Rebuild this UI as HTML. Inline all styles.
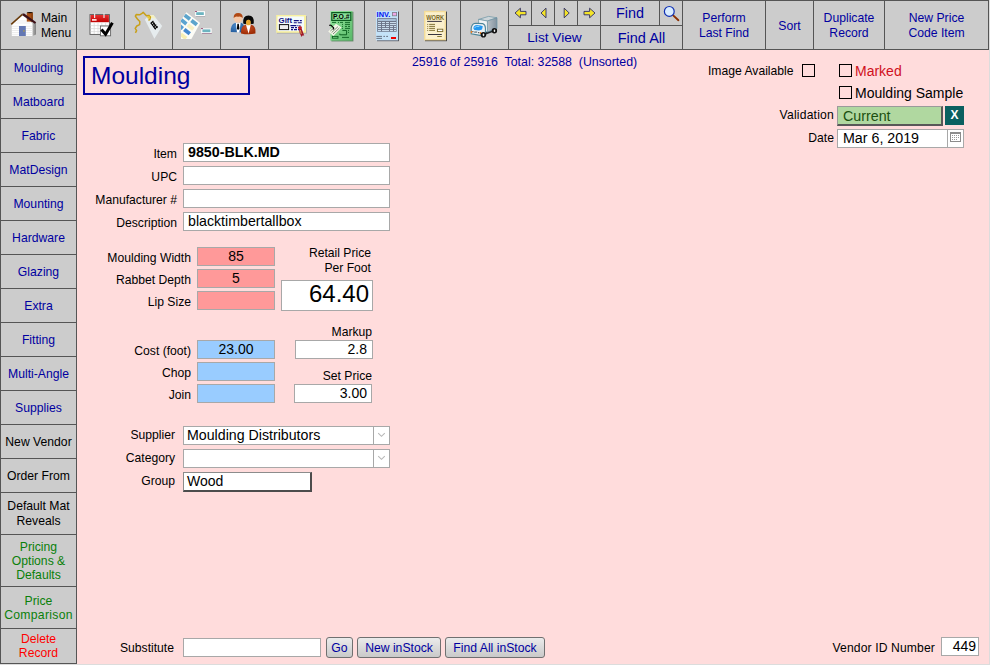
<!DOCTYPE html>
<html><head><meta charset="utf-8"><title>Moulding</title>
<style>
*{box-sizing:border-box;margin:0;padding:0}
html,body{width:990px;height:665px;overflow:hidden}
body{background:#ffdcdc;font-family:"Liberation Sans",sans-serif;font-size:13px;color:#000;position:relative}
.a{position:absolute}
.g{position:absolute;background:#cccccc}
.l{position:absolute;background:#555}
.t{position:absolute;color:#0000a0;text-align:center;white-space:nowrap}
.lbl{position:absolute;text-align:right;white-space:nowrap;font-size:12.15px;line-height:15px}
.f{position:absolute;background:#fff;border:1px solid #a8a8a8;font-size:14px;line-height:17px;white-space:nowrap;overflow:hidden}
.sb{position:absolute;left:1px;width:75px;text-align:center;color:#0000a0;font-size:12.2px;line-height:14px}
.btn{height:21px;border:1px solid #707070;border-radius:3px;background:linear-gradient(#ebebeb,#c9c9c9);color:#0000a0;font-size:12.2px;line-height:19px;padding-top:1px;text-align:center;white-space:nowrap}
</style></head><body>
<!-- toolbar -->
<div class="g" style="left:0;top:0;width:989px;height:50px"></div>
<div class="g" style="left:0;top:50px;width:77px;height:615px"></div>
<div class="l" style="left:0;top:0;width:989px;height:1px"></div>
<div class="l" style="left:0;top:49px;width:989px;height:1px"></div>
<div class="l" style="left:0;top:0;width:1px;height:665px"></div>
<div class="l" style="left:76px;top:0;width:1px;height:664px"></div>
<div class="l" style="left:0;top:663px;width:77px;height:1px"></div>
<div class="a" style="left:0;top:664px;width:990px;height:1px;background:#dcdcdc"></div>
<div class="a" style="left:989px;top:0;width:1px;height:665px;background:#dcdcdc"></div>
<div class="l" style="left:124px;top:0;width:1px;height:50px"></div>
<div class="l" style="left:172px;top:0;width:1px;height:50px"></div>
<div class="l" style="left:220px;top:0;width:1px;height:50px"></div>
<div class="l" style="left:268px;top:0;width:1px;height:50px"></div>
<div class="l" style="left:316px;top:0;width:1px;height:50px"></div>
<div class="l" style="left:364px;top:0;width:1px;height:50px"></div>
<div class="l" style="left:412px;top:0;width:1px;height:50px"></div>
<div class="l" style="left:460px;top:0;width:1px;height:50px"></div>
<div class="l" style="left:508px;top:0;width:1px;height:50px"></div>
<div class="l" style="left:600px;top:0;width:1px;height:50px"></div>
<div class="l" style="left:682px;top:0;width:1px;height:50px"></div>
<div class="l" style="left:765px;top:0;width:1px;height:50px"></div>
<div class="l" style="left:813px;top:0;width:1px;height:50px"></div>
<div class="l" style="left:884px;top:0;width:1px;height:50px"></div>
<div class="l" style="left:988px;top:0;width:1px;height:50px"></div>
<div class="l" style="left:531px;top:0;width:1px;height:25px"></div>
<div class="l" style="left:554px;top:0;width:1px;height:25px"></div>
<div class="l" style="left:577px;top:0;width:1px;height:25px"></div>
<div class="l" style="left:659px;top:0;width:1px;height:25px"></div>
<div class="l" style="left:508px;top:25px;width:175px;height:1px"></div>


<div class="a" style="left:41px;top:11px;width:34px;font-size:12.1px;line-height:15px;color:#000;text-align:left">Main<br>Menu</div>
<div class="t" style="left:601px;top:3px;width:58px;font-size:14.4px;line-height:20px">Find</div>
<div class="t" style="left:509px;top:28px;width:91px;font-size:13.7px;line-height:20px">List View</div>
<div class="t" style="left:601px;top:28px;width:81px;font-size:14.5px;line-height:20px">Find All</div>
<div class="t" style="left:683px;top:11px;width:82px;font-size:12.2px;line-height:15px">Perform<br>Last Find</div>
<div class="t" style="left:766px;top:19px;width:47px;font-size:12.2px;line-height:15px">Sort</div>
<div class="t" style="left:814px;top:11px;width:70px;font-size:12.2px;line-height:15px">Duplicate<br>Record</div>
<div class="t" style="left:885px;top:11px;width:103px;font-size:12.2px;line-height:15px">New Price<br>Code Item</div>
<!-- ICONS-START --><svg class="a" style="left:0;top:0" width="990" height="50" viewBox="0 0 990 50" font-family="Liberation Sans, sans-serif">
<defs>
<linearGradient id="gside" x1="0" x2="1"><stop offset="0" stop-color="#b4b4b4"/><stop offset="1" stop-color="#808080"/></linearGradient>
<linearGradient id="gred" x1="0" x2="0" y1="0" y2="1"><stop offset="0" stop-color="#e83030"/><stop offset="1" stop-color="#c00000"/></linearGradient>
<linearGradient id="ggreen" x1="0" x2="1" y1="0" y2="1"><stop offset="0" stop-color="#98e8a0"/><stop offset="1" stop-color="#58b868"/></linearGradient>
<linearGradient id="gtruck" x1="0" x2="1"><stop offset="0" stop-color="#b8c0c6"/><stop offset="1" stop-color="#8292a0"/></linearGradient>
<radialGradient id="gman" cx="0.4" cy="0.3" r="0.8"><stop offset="0" stop-color="#4888c8"/><stop offset="1" stop-color="#205898"/></radialGradient>
<radialGradient id="gwom" cx="0.4" cy="0.3" r="0.8"><stop offset="0" stop-color="#c85028"/><stop offset="1" stop-color="#982800"/></radialGradient>
</defs>
<!-- house -->
<g>
<polygon points="32.4,23.2 36,22.2 36,34.4 32.4,36" fill="url(#gside)"/>
<polygon points="11.8,24.2 22.4,15.2 32.4,23.6 32.4,36 11.8,36" fill="#ffffff"/>
<g stroke="#e4e4e4" stroke-width="0.7"><line x1="12" y1="26.3" x2="32.4" y2="26.3"/><line x1="12" y1="28.4" x2="32.4" y2="28.4"/><line x1="12" y1="30.5" x2="32.4" y2="30.5"/><line x1="12" y1="32.6" x2="32.4" y2="32.6"/><line x1="12" y1="34.7" x2="32.4" y2="34.7"/><line x1="17" y1="21" x2="28" y2="21"/><line x1="15" y1="23" x2="30" y2="23"/></g>
<rect x="26.8" y="12.6" width="6" height="9" fill="#a85018"/>
<rect x="31.3" y="12.6" width="1.5" height="9" fill="#884010"/>
<ellipse cx="29.8" cy="12.6" rx="3" ry="0.7" fill="#100800"/>
<polygon points="22.4,13.6 24.2,13.4 36.2,22.2 34.8,23.8 22.4,15.2" fill="#3c1018"/>
<polyline points="11.2,24.4 22.4,14.4" fill="none" stroke="#6a3c0c" stroke-width="1.6"/>
<rect x="19" y="26" width="6.8" height="10" fill="#6478b4"/>
<rect x="23.3" y="30.3" width="1.3" height="1.3" fill="#c0a830"/>
</g>
<!-- calendar check -->
<g>
<rect x="90" y="14.6" width="19.4" height="19.8" fill="#fff" stroke="#555" stroke-width="0.9"/>
<rect x="90.5" y="15" width="18.4" height="7.2" fill="url(#gred)"/>
<rect x="92" y="19" width="4.6" height="1.8" fill="#ffd8d8"/>
<g stroke="#d4d4d4" stroke-width="0.7"><line x1="90.5" y1="25.6" x2="109" y2="25.6"/><line x1="90.5" y1="28.6" x2="109" y2="28.6"/><line x1="90.5" y1="31.6" x2="109" y2="31.6"/><line x1="94.2" y1="22.5" x2="94.2" y2="34"/><line x1="98" y1="22.5" x2="98" y2="34"/><line x1="101.8" y1="22.5" x2="101.8" y2="34"/><line x1="105.6" y1="22.5" x2="105.6" y2="34"/></g>
<line x1="94.6" y1="13.2" x2="94.6" y2="18" stroke="#e8e8e8" stroke-width="1.2"/><line x1="104" y1="13.2" x2="104" y2="18" stroke="#e8e8e8" stroke-width="1.2"/>
<rect x="100.4" y="26" width="10.2" height="9.8" fill="#fff" stroke="#666" stroke-width="0.9"/>
<polyline points="101.4,29.4 105.6,34.2 112.4,22.8" fill="none" stroke="#000" stroke-width="3" stroke-linejoin="miter"/>
</g>
<!-- tag -->
<g>
<polygon points="144.8,19.6 149.5,15.2 153.4,15 162.2,26 154.4,38.8" fill="#e6ecee"/>
<polygon points="149.5,15.2 153.4,15 156,18.4 151,18" fill="#f4f0c0"/>
<path d="M135.4 32.8 L136.6 30.6 L135.2 28.4 L136.8 26 L139.6 24.6 L139.8 21.6 L137.4 19 L135.4 16.2 L136.2 14.6 L139.6 14.8 L142 13.4 L143.2 12.4 L145 14.2 L146.4 15.8 L148.8 15.4 L150.4 17 L149.8 19.6 L148.4 20.2" fill="none" stroke="#c8a018" stroke-width="1.5" stroke-linejoin="round"/>
<circle cx="148.6" cy="17.4" r="1.3" fill="#e8c830"/>
<g stroke="#000" stroke-width="1.1"><line x1="150.6" y1="23.4" x2="153.4" y2="21"/><line x1="152" y1="25.2" x2="154.8" y2="22.8"/><line x1="153.4" y1="27" x2="156.2" y2="24.6"/><line x1="154.8" y1="28.8" x2="157.6" y2="26.4"/><line x1="152.6" y1="21.8" x2="157.4" y2="28"/><line x1="151" y1="23" x2="155.6" y2="29.4"/></g>
</g>
<!-- stickers -->
<g>
<clipPath id="shc"><polygon points="186.4,12.2 200.2,23 191.4,39 181,39 181,20"/></clipPath>
<polygon points="186.4,12.2 200.2,23 191.4,39 181,39 181,20" fill="#fcfcf6"/>
<g clip-path="url(#shc)"><g transform="translate(186.4,12.2) rotate(38)"><rect x="0.4" y="1.5" width="6.8" height="3.8" fill="#5ca4cc"/><rect x="9" y="1.5" width="7" height="3.8" fill="#5ca4cc"/><rect x="0.4" y="7.3" width="6.8" height="3.8" fill="#5ca4d0"/><rect x="9" y="7.3" width="7" height="3.8" fill="#f8f0c4"/><rect x="0.4" y="13.1" width="6.8" height="3.8" fill="#58a0d4"/><rect x="9" y="13.1" width="7" height="3.8" fill="#4488d0"/><rect x="0.4" y="18.9" width="6.8" height="3.8" fill="#f8dcb0"/><rect x="9" y="18.9" width="7" height="3.8" fill="#f8eeb0"/><rect x="0.4" y="24.7" width="6.8" height="3.8" fill="#4c9cd8"/><rect x="9" y="24.7" width="7" height="3.8" fill="#f8f0a8"/><rect x="0.4" y="30.5" width="6.8" height="3.8" fill="#4c9cd8"/><rect x="9" y="30.5" width="7" height="3.8" fill="#f8f0a8"/></g></g>
<rect x="195.2" y="11.2" width="9.8" height="4.8" fill="#fff"/><rect x="196.2" y="12.2" width="7.6" height="2.8" fill="#6cb4c0"/><rect x="195.2" y="11" width="1.6" height="0.9" fill="#802050"/>
<rect x="201.2" y="28.4" width="10.4" height="4.8" fill="#fff"/><rect x="202.4" y="29.4" width="8" height="2.8" fill="#6cb4c0"/><rect x="201.2" y="28.2" width="1.6" height="0.9" fill="#802050"/>
<rect x="202" y="33.2" width="9.8" height="0.6" fill="#906080"/><rect x="196" y="16" width="9.2" height="0.6" fill="#a0a0a8"/>
</g>
<!-- people -->
<g>
<path d="M230.8 32 Q230.4 24.4 235 23 L241.6 23 Q245 24.4 244.4 32.6 Z" fill="url(#gman)"/>
<polygon points="235.8,23 240.6,23 239.4,32.4 237,32.4" fill="#fff"/>
<polygon points="237.4,23.8 238.8,23.8 239.4,28.8 238.1,30 236.9,28.8" fill="#000"/>
<circle cx="238.1" cy="18.4" r="4.3" fill="#f4c8a8"/>
<path d="M233.6 18 Q233.6 13 238.1 13 Q242.8 13 242.8 18 Q240.4 15.8 238.1 16.8 Q235.6 15.8 233.6 18 Z" fill="#b04814"/>
<path d="M241 33.4 Q240.6 26 245.4 24.8 L251.6 24.8 Q256 26 255.4 33.6 Q248 35 241 33.4 Z" fill="url(#gwom)"/>
<polygon points="246,24.8 250.8,24.8 248.6,33.8" fill="#fff"/>
<path d="M243.2 23.6 Q242.4 15.4 248.5 15.4 Q254.6 15.4 253.8 23.6 Q252 24.4 250.6 23.4 L246.4 23.4 Q245 24.4 243.2 23.6 Z" fill="#080808"/>
<ellipse cx="248.4" cy="22.4" rx="2.4" ry="2.8" fill="#e8a830"/>
<path d="M245.6 21 Q248.4 17.6 251.4 21 Q251 18.4 248.4 18.4 Q246 18.4 245.6 21Z" fill="#080808"/>
</g>
<!-- gift -->
<g>
<rect x="277" y="16" width="30" height="17.6" fill="#888" opacity="0.5"/>
<rect x="276.2" y="15" width="29.8" height="17.8" fill="#f8f0a0"/>
<rect x="277.6" y="16.4" width="26.4" height="14.8" fill="#f4fafc"/>
<text x="278.6" y="23" font-size="7.6" font-weight="bold" fill="#101080" textLength="13.4" lengthAdjust="spacingAndGlyphs">Gift</text>
<g stroke="#101080" stroke-width="1.1"><line x1="293.8" y1="20.6" x2="302" y2="20.6" stroke-dasharray="5,1,2"/><line x1="293.8" y1="22.8" x2="302" y2="22.8" stroke-dasharray="3,1,4"/><line x1="290.4" y1="25.6" x2="300.4" y2="25.6" stroke-dasharray="6,1,1,1"/><line x1="291" y1="27.6" x2="299" y2="27.6" stroke-dasharray="3,1,2,1"/><line x1="291" y1="29.6" x2="299" y2="29.6" stroke-dasharray="2,1,3,1"/></g>
<rect x="279.4" y="24.6" width="9.2" height="5" fill="#f0f0f0" stroke="#111" stroke-width="1"/>
<circle cx="300" cy="27.8" r="1.9" fill="#c02028"/>
<polygon points="299,29 301.6,28.6 304.2,35.6 302.4,35.4 301.6,37 299.6,33" fill="#a01828"/>
<line x1="300.4" y1="30" x2="301.2" y2="34" stroke="#f0c060" stroke-width="0.8"/>
</g>
<!-- PO -->
<g>
<rect x="331.4" y="11.8" width="22" height="29.6" fill="#306838" opacity="0.7"/>
<rect x="330.4" y="11" width="22" height="29.6" fill="url(#ggreen)"/>
<rect x="331.8" y="12.6" width="19" height="7.8" fill="#88e098" stroke="#0c5c20" stroke-width="1.2"/>
<text x="333" y="18.9" font-size="6.6" font-weight="bold" fill="#000" textLength="16.6" lengthAdjust="spacingAndGlyphs">P.O.#</text>
<g stroke="#0c6020" stroke-width="0.9"><line x1="332" y1="22.4" x2="336" y2="22.4"/><line x1="338" y1="22.4" x2="343" y2="22.4" stroke-dasharray="1,1,3"/><line x1="345" y1="22.4" x2="350" y2="22.4"/><line x1="342" y1="24.4" x2="350" y2="24.4" stroke-dasharray="1,2,5"/><line x1="342" y1="26.4" x2="350" y2="26.4" stroke-dasharray="1,2,2,1,2"/><line x1="342" y1="28.4" x2="350" y2="28.4" stroke-dasharray="1,2,5"/><line x1="348" y1="30.4" x2="349" y2="30.4"/><line x1="348" y1="32.4" x2="349" y2="32.4"/><line x1="342" y1="37.4" x2="349" y2="37.4"/></g>
<path d="M342.4 30.4 L346.6 30.4 L346.6 34.8 L339.8 34.8 L339.8 33.6" fill="none" stroke="#0c6020" stroke-width="1"/>
<rect x="332.4" y="36.4" width="5.6" height="1.8" fill="none" stroke="#0c6020" stroke-width="0.9"/>
<polygon points="328.2,31.4 336,23.8 341.6,27.6 333.4,36" fill="#f4f6e8"/>
<g stroke="#2c4c30" stroke-width="0.6"><line x1="331.6" y1="32.6" x2="338" y2="26.6"/><line x1="333" y1="34" x2="339.4" y2="28"/><line x1="330.4" y1="31" x2="333" y2="28.6"/></g>
<path d="M329.4 25.6 Q330 24.6 331.4 25.6 L333.6 27.8 Q334 29 332.8 29.2" fill="none" stroke="#000" stroke-width="1.2"/>
</g>
<!-- INV -->
<g>
<rect x="377" y="11.6" width="22" height="29.6" fill="#585860"/>
<rect x="376" y="10.8" width="22" height="29.6" fill="#c4e2f8"/>
<text x="376.6" y="16.9" font-size="7" font-weight="bold" fill="#0010f0" textLength="13.6" lengthAdjust="spacingAndGlyphs">INV.</text>
<rect x="392.4" y="12.4" width="4.2" height="3.4" fill="#f0a8e8" stroke="#808088" stroke-width="0.8"/>
<rect x="377.2" y="18.2" width="19.4" height="13.6" fill="#6c7488"/>
<rect x="378" y="19.2" width="17.8" height="1.6" fill="#b8d4ec"/>
<g stroke="#d4e8f8" stroke-width="1"><line x1="378" y1="22.6" x2="396" y2="22.6" stroke-dasharray="3,1,3,1,3,1,6"/><line x1="378" y1="24.6" x2="396" y2="24.6" stroke-dasharray="3,1,3,1,3,1,6"/><line x1="378" y1="26.6" x2="396" y2="26.6" stroke-dasharray="3,1,3,1,3,1,3,1,2"/><line x1="378" y1="28.6" x2="396" y2="28.6" stroke-dasharray="3,1,7,1,3,1,2"/><line x1="378" y1="30.6" x2="396" y2="30.6" stroke-dasharray="3,1,7,1,3,1,2"/></g>
<g stroke="#606878" stroke-width="0.9"><line x1="376.4" y1="36.4" x2="382" y2="36.4"/><line x1="383.4" y1="36.4" x2="385" y2="36.4"/><line x1="386.2" y1="36.4" x2="388" y2="36.4"/><line x1="376.4" y1="38.4" x2="382" y2="38.4"/></g>
<rect x="391" y="37" width="5" height="2" fill="#f00000"/>
</g>
<!-- WORK -->
<g>
<rect x="425" y="11.6" width="22" height="29.6" fill="#484848"/>
<rect x="424" y="10.8" width="22" height="29.6" fill="#f4dc98"/>
<rect x="425.4" y="12.2" width="19.2" height="26.8" fill="#fbf0cc"/>
<text x="426.2" y="19.7" font-size="7.4" font-weight="bold" fill="#786828" textLength="18" lengthAdjust="spacingAndGlyphs">WORK</text>
<line x1="427.2" y1="21.4" x2="441.8" y2="21.4" stroke="#383440" stroke-width="1"/>
<g stroke="#786828" stroke-width="0.9"><line x1="427.2" y1="24.4" x2="435" y2="24.4" stroke-dasharray="1,1,6"/><line x1="427.2" y1="26.4" x2="435" y2="26.4" stroke-dasharray="1,1,6"/><line x1="427.2" y1="28.4" x2="435" y2="28.4" stroke-dasharray="1,1,6"/><line x1="427.2" y1="30.4" x2="435" y2="30.4" stroke-dasharray="1,1,6"/></g>
<rect x="437.4" y="29.2" width="5.4" height="2.4" fill="#fff" stroke="#786828" stroke-width="0.9"/>
<line x1="428" y1="34.5" x2="441.8" y2="34.5" stroke="#383440" stroke-width="1"/>
<line x1="437.2" y1="36.5" x2="441.8" y2="36.5" stroke="#786828" stroke-width="0.9"/>
</g>
<!-- truck -->
<g>
<polygon points="486,31.6 497,28.4 497,30.6 486,34.4" fill="#202428"/>
<polygon points="478.6,19.4 488.6,16.4 497,17.8 487.4,21" fill="#cdd5d9" stroke="#6c94a4" stroke-width="0.7"/>
<polygon points="487.4,21 497,17.8 497,28.6 487.4,32" fill="url(#gtruck)" stroke="#6c94a4" stroke-width="0.7"/>
<polygon points="478.6,19.4 487.4,21 487.4,32 478.6,30" fill="#f0f3f5" stroke="#6c94a4" stroke-width="0.7"/>
<circle cx="494.4" cy="30.8" r="2.7" fill="#101010"/><ellipse cx="494.5" cy="30.8" rx="0.8" ry="1.3" fill="#f0f0f0"/>
<path d="M471.2 33.8 L471.2 28 Q472 23.2 476 23.2 L482.6 23.6 Q485.4 24.6 485.4 28 L485.4 34.6 L480 35.4 Z" fill="#eef2f4" stroke="#4c8498" stroke-width="1.1"/>
<path d="M473.4 28.6 Q473.4 25 477 25 L480.6 25.4 L482.8 26.2 L482 29.6 L479 30.4 L474.4 30 Z" fill="#2498f0"/>
<path d="M474.4 27.8 Q476 25.8 479.4 26.4" fill="none" stroke="#90d8ff" stroke-width="1"/>
<rect x="470.8" y="31" width="1.3" height="2.1" fill="#f08020"/><rect x="479.8" y="32" width="1.3" height="2.1" fill="#f08020"/>
<rect x="472.4" y="31.2" width="1" height="1" fill="#101010"/><rect x="478.2" y="32.2" width="1" height="1" fill="#101010"/>
<rect x="474.2" y="31.4" width="3" height="1.4" fill="#708088"/>
<circle cx="483.4" cy="34.8" r="2.8" fill="#101010"/><ellipse cx="483.5" cy="34.8" rx="0.85" ry="1.4" fill="#f0f0f0"/>
</g>
<!-- arrows -->
<g fill="#f4e428" stroke="#181860" stroke-width="0.8" stroke-linejoin="miter">
<polygon points="515,13 520.4,8.2 520.4,11.4 526,11.4 526,14.8 520.4,14.8 520.4,17.8"/>
<polygon points="541,13 546,8.2 546,17.8"/>
<polygon points="569.2,13 564.2,8.2 564.2,17.8"/>
<polygon points="595,13 589.6,8.2 589.6,11.4 584,11.4 584,14.8 589.6,14.8 589.6,17.8"/>
</g>
<!-- magnifier -->
<line x1="673.2" y1="15.4" x2="678.4" y2="20.2" stroke="#8c3000" stroke-width="1.9" stroke-linecap="round"/>
<circle cx="669.3" cy="11.4" r="4.9" fill="#d8ecff" stroke="#1030b4" stroke-width="1.2"/>
</svg>
<!-- ICONS-END -->
<div class="l" style="left:0;top:84px;width:77px;height:1px"></div>
<div class="l" style="left:0;top:118px;width:77px;height:1px"></div>
<div class="l" style="left:0;top:152px;width:77px;height:1px"></div>
<div class="l" style="left:0;top:186px;width:77px;height:1px"></div>
<div class="l" style="left:0;top:220px;width:77px;height:1px"></div>
<div class="l" style="left:0;top:254px;width:77px;height:1px"></div>
<div class="l" style="left:0;top:288px;width:77px;height:1px"></div>
<div class="l" style="left:0;top:322px;width:77px;height:1px"></div>
<div class="l" style="left:0;top:356px;width:77px;height:1px"></div>
<div class="l" style="left:0;top:390px;width:77px;height:1px"></div>
<div class="l" style="left:0;top:424px;width:77px;height:1px"></div>
<div class="l" style="left:0;top:458px;width:77px;height:1px"></div>
<div class="l" style="left:0;top:492px;width:77px;height:1px"></div>
<div class="l" style="left:0;top:534px;width:77px;height:1px"></div>
<div class="l" style="left:0;top:586px;width:77px;height:1px"></div>
<div class="l" style="left:0;top:628px;width:77px;height:1px"></div>
<div class="sb" style="top:60.5px;color:#0000a0">Moulding</div>
<div class="sb" style="top:94.5px;color:#0000a0">Matboard</div>
<div class="sb" style="top:128.5px;color:#0000a0">Fabric</div>
<div class="sb" style="top:162.5px;color:#0000a0">MatDesign</div>
<div class="sb" style="top:196.5px;color:#0000a0">Mounting</div>
<div class="sb" style="top:230.5px;color:#0000a0">Hardware</div>
<div class="sb" style="top:264.5px;color:#0000a0">Glazing</div>
<div class="sb" style="top:298.5px;color:#0000a0">Extra</div>
<div class="sb" style="top:332.5px;color:#0000a0">Fitting</div>
<div class="sb" style="top:366.5px;color:#0000a0">Multi-Angle</div>
<div class="sb" style="top:400.5px;color:#0000a0">Supplies</div>
<div class="sb" style="top:434.5px;color:#000">New Vendor</div>
<div class="sb" style="top:468.5px;color:#000">Order From</div>
<div class="sb" style="top:499.0px;color:#000;line-height:14.6px">Default Mat<br>Reveals</div>
<div class="sb" style="top:539.5px;color:#0a800a">Pricing<br>Options &amp;<br>Defaults</div>
<div class="sb" style="top:593.5px;color:#0a800a">Price<br><span style="letter-spacing:0.3px">Comparison</span></div>
<div class="sb" style="top:631.5px;color:#ff0000;line-height:14.8px">Delete<br>Record</div>


<div class="a" style="left:83px;top:56px;width:167px;height:39px;border:2px solid #0000a0;color:#0000a0;font-size:24.5px;line-height:35px;padding-left:6px">Moulding</div>
<div class="a" style="left:412px;top:55px;font-size:12.36px;line-height:15px;color:#0000a0;white-space:pre">25916 of 25916  Total: 32588  (Unsorted)</div>

<div class="lbl" style="left:77px;width:100px;top:147px">Item</div>
<div class="lbl" style="left:77px;width:100px;top:170px">UPC</div>
<div class="lbl" style="left:77px;width:100px;top:193px">Manufacturer #</div>
<div class="lbl" style="left:77px;width:100px;top:216px">Description</div>
<div class="f" style="left:183px;top:143px;width:207px;height:19px;padding-left:4px;font-weight:bold;font-size:14.25px">9850-BLK.MD</div>
<div class="f" style="left:183px;top:166px;width:207px;height:19px"></div>
<div class="f" style="left:183px;top:189px;width:207px;height:19px"></div>
<div class="f" style="left:183px;top:212px;width:207px;height:19px;padding-left:4px;font-size:14.2px">blacktimbertallbox</div>

<div class="lbl" style="left:77px;width:114px;top:251px">Moulding Width</div>
<div class="lbl" style="left:77px;width:114px;top:273px">Rabbet Depth</div>
<div class="lbl" style="left:77px;width:114px;top:295px">Lip Size</div>
<div class="f" style="left:197px;top:247px;width:78px;height:19px;background:#ff9999;text-align:center;font-size:14px">85</div>
<div class="f" style="left:197px;top:269px;width:78px;height:19px;background:#ff9999;text-align:center;font-size:14px">5</div>
<div class="f" style="left:197px;top:291px;width:78px;height:19px;background:#ff9999"></div>
<div class="lbl" style="left:271px;width:100px;top:246px">Retail Price<br>Per Foot</div>
<div class="f" style="left:281px;top:280px;width:92px;height:31px;text-align:right;font-size:24px;line-height:26px;padding-right:3px">64.40</div>

<div class="lbl" style="left:77px;width:114px;top:344px">Cost (foot)</div>
<div class="lbl" style="left:77px;width:114px;top:366px">Chop</div>
<div class="lbl" style="left:77px;width:114px;top:388px">Join</div>
<div class="f" style="left:197px;top:340px;width:78px;height:19px;background:#99ccff;text-align:center;font-size:14px">23.00</div>
<div class="f" style="left:197px;top:362px;width:78px;height:19px;background:#99ccff"></div>
<div class="f" style="left:197px;top:384px;width:78px;height:19px;background:#99ccff"></div>
<div class="lbl" style="left:272px;width:100px;top:325px">Markup</div>
<div class="f" style="left:295px;top:340px;width:78px;height:19px;text-align:right;font-size:14px;padding-right:5px">2.8</div>
<div class="lbl" style="left:272px;width:100px;top:369px">Set Price</div>
<div class="f" style="left:294px;top:384px;width:78px;height:19px;text-align:right;font-size:14px;padding-right:4px">3.00</div>

<div class="lbl" style="left:76px;width:99px;top:428px">Supplier</div>
<div class="lbl" style="left:76px;width:99px;top:451px">Category</div>
<div class="lbl" style="left:76px;width:99px;top:474px">Group</div>
<div class="f" style="left:183px;top:426px;width:207px;height:19px;padding-left:3px;font-size:14.2px">Moulding Distributors</div>
<div class="f" style="left:183px;top:449px;width:207px;height:19px"></div>
<div class="f" style="left:183px;top:472px;width:129px;height:20px;padding-left:3px;font-size:14px;border-color:#8c8c8c #4c4c4c #4c4c4c #8c8c8c;border-width:1px 2px 2px 1px">Wood</div>


<div class="a" style="left:373px;top:427px;width:1px;height:17px;background:#a8a8a8"></div>
<svg class="a" style="left:377px;top:432px" width="9" height="6" viewBox="0 0 9 6"><path d="M1.2 1.2 L4.5 4.3 L7.8 1.2" fill="none" stroke="#b8b8b8" stroke-width="1.1"/></svg>
<div class="a" style="left:373px;top:450px;width:1px;height:17px;background:#a8a8a8"></div>
<svg class="a" style="left:377px;top:455px" width="9" height="6" viewBox="0 0 9 6"><path d="M1.2 1.2 L4.5 4.3 L7.8 1.2" fill="none" stroke="#b8b8b8" stroke-width="1.1"/></svg>
<div class="lbl" style="left:690px;width:105px;top:64px;text-align:left;left:708px">Image Available</div>
<div class="a" style="left:802px;top:64px;width:13px;height:13px;border:1px solid #000"></div>
<div class="a" style="left:839px;top:64px;width:13px;height:13px;border:1px solid #000"></div>
<div class="a" style="left:855px;top:63px;font-size:14px;line-height:17px;color:#d0101c">Marked</div>
<div class="a" style="left:839px;top:86px;width:13px;height:13px;border:1px solid #000"></div>
<div class="a" style="left:855px;top:85px;font-size:14px;line-height:17px">Moulding Sample</div>
<div class="lbl" style="left:734px;width:100px;top:108px;letter-spacing:0.2px">Validation</div>
<div class="a" style="left:837px;top:106px;width:106px;height:20px;background:#b0d8a0;border:solid;border-color:#9a9a9a #585858 #585858 #9a9a9a;border-width:1px 2px 2px 1px;color:#1c5010;font-size:14.25px;line-height:18px;padding-left:5px">Current</div>
<div class="a" style="left:945px;top:106px;width:19px;height:19px;background:#0a6060;color:#fff;font-size:12px;line-height:19px;text-align:center;font-weight:bold">X</div>
<div class="lbl" style="left:734px;width:100px;top:131px">Date</div>
<div class="f" style="left:837px;top:129px;width:127px;height:19px;font-size:14.25px;padding-left:5px">Mar 6, 2019</div>

<div class="a" style="left:947px;top:130px;width:1px;height:17px;background:#a8a8a8"></div>
<svg class="a" style="left:950px;top:132px" width="11" height="10" viewBox="0 0 11 10" shape-rendering="crispEdges"><rect x="0" y="0" width="11" height="10" fill="#8c8c8c"/><rect x="1" y="2" width="9" height="7" fill="#fff"/><rect x="2" y="3" width="1" height="1" fill="#999"/><rect x="4" y="3" width="1" height="1" fill="#999"/><rect x="6" y="3" width="1" height="1" fill="#999"/><rect x="8" y="3" width="1" height="1" fill="#999"/><rect x="2" y="5" width="1" height="1" fill="#999"/><rect x="4" y="5" width="1" height="1" fill="#999"/><rect x="6" y="5" width="1" height="1" fill="#999"/><rect x="8" y="5" width="1" height="1" fill="#999"/><rect x="2" y="7" width="1" height="1" fill="#999"/><rect x="4" y="7" width="1" height="1" fill="#999"/><rect x="6" y="7" width="1" height="1" fill="#999"/></svg>
<div class="lbl" style="left:76px;width:98px;top:641px">Substitute</div>
<div class="f" style="left:183px;top:638px;width:138px;height:19px"></div>
<div class="a btn" style="left:326px;top:637px;width:27px">Go</div>
<div class="a btn" style="left:357px;top:637px;width:84px">New inStock</div>
<div class="a btn" style="left:445px;top:637px;width:100px">Find All inStock</div>
<div class="lbl" style="left:800px;width:135px;top:641px;letter-spacing:0.12px">Vendor ID Number</div>
<div class="f" style="left:941px;top:637px;width:38px;height:19px;text-align:right;font-size:14px;padding-right:2px">449</div>

</body></html>
